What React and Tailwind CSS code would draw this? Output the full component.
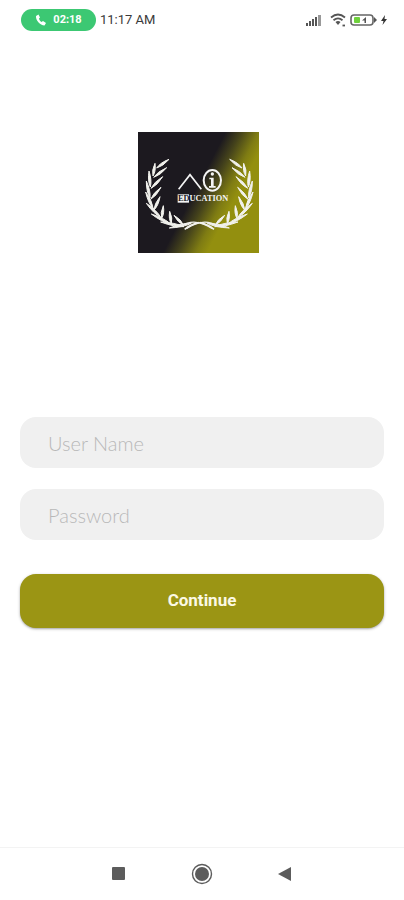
import { useState } from 'react';

// Each entry is one leaf: base point, tip point.
const LEAVES = [
  [56, 108, 93, 82],
  [45, 132, 51, 94],
  [47, 136, 86, 107],
  [37, 165, 33, 117],
  [39, 169, 74, 134],
  [36, 198, 25, 147],
  [38, 202, 69, 166],
  [46, 231, 23, 180],
  [48, 234, 66, 194],
  [69, 257, 25, 214],
  [71, 259, 76, 221],
  [98, 276, 40, 246],
  [100, 275, 95, 238],
  [138, 284, 68, 270],
  [136, 279, 108, 250],
  [160, 274, 94, 288],
];

function leafPath([x1, y1, x2, y2]) {
  const dx = x2 - x1;
  const dy = y2 - y1;
  const len = Math.hypot(dx, dy);
  const nx = (-dy / len) * 7;
  const ny = (dx / len) * 7;
  const mx = x1 + dx * 0.4;
  const my = y1 + dy * 0.4;
  return `M${x1} ${y1}Q${mx + nx} ${my + ny} ${x2} ${y2}Q${mx - nx} ${my - ny} ${x1} ${y1}Z`;
}

function Branch() {
  return (
    <g fill="#f1f1ec" stroke="#f1f1ec" strokeWidth="3" strokeLinejoin="round">
      {LEAVES.map((leaf) => (
        <path key={leaf.join()} d={leafPath(leaf)} />
      ))}
      <path d="M128 282C160 264 186 268 222 289" fill="none" strokeWidth="4" />
      <path d="M140 292Q160 276 182 272" fill="none" strokeWidth="5" />
    </g>
  );
}

function Logo() {
  return (
    <svg viewBox="0 0 363 363" className="size-[121px]" role="img" aria-label="Ai Education">
      <defs>
        <linearGradient id="logo-bg" gradientUnits="userSpaceOnUse" x1="171" y1="177" x2="275" y2="231">
          <stop offset="0" stopColor="#1c191f" />
          <stop offset="0.35" stopColor="#45431b" />
          <stop offset="0.75" stopColor="#7f7c13" />
          <stop offset="1" stopColor="#938f0f" />
        </linearGradient>
      </defs>
      <rect width="363" height="363" fill="url(#logo-bg)" />
      <Branch />
      <g transform="translate(368 0) scale(-1 1)">
        <Branch />
      </g>
      <path d="M122 172L156 128L190 172" fill="none" stroke="#f4f4f4" strokeWidth="5" />
      <ellipse cx="223" cy="145" rx="26" ry="31" fill="none" stroke="#f4f4f4" strokeWidth="6" />
      <circle cx="223" cy="126" r="5" fill="#f4f4f4" />
      <path d="M214 137H227V162H233V167H213V162H219V142H214Z" fill="#f4f4f4" />
      <rect x="119" y="187" width="34" height="25" fill="#f4f4f4" />
      <text
        x="120"
        y="208"
        fontSize="25"
        fontWeight="700"
        fill="#f4f4f4"
        className="font-['Liberation_Serif',serif]"
      >
        <tspan fill="#1c191f">ED</tspan>UCATION
      </text>
    </svg>
  );
}

function StatusBar() {
  return (
    <header className="flex h-10 items-center px-[21px] text-[#3a3a3a]">
      <div className="flex h-[22px] w-[75px] items-center justify-center gap-1.5 rounded-full bg-[#3cc873] text-white">
        <svg viewBox="0 0 24 24" className="size-3" fill="currentColor" aria-hidden="true">
          <path d="M7 1L2 4C1 12 10 23 19 23L22 18L16 14L13 16C10 14 8 11 8 9L10 7Z" />
        </svg>
        <span className="text-[11px] font-bold">02:18</span>
      </div>
      <span className="ml-1 text-[13px]">11:17 AM</span>
      <div className="-mr-1 ml-auto flex items-center gap-1">
        <svg viewBox="0 0 16 12" className="h-3 w-4" fill="#555" aria-hidden="true">
          <rect x="0" y="9" width="2" height="3" />
          <rect x="3" y="7" width="2" height="5" />
          <rect x="6" y="5" width="2" height="7" />
          <rect x="9" y="3" width="2" height="9" />
          <rect x="12" y="1" width="3" height="11" fill="#999" />
        </svg>
        <svg viewBox="0 0 16 14" className="ml-1 h-3.5 w-4" fill="none" stroke="#555" strokeWidth="1.8" aria-hidden="true">
          <path d="M1 4.5Q8 -1.5 15 4.5M3.5 7.3Q8 3.5 12.5 7.3" />
          <path d="M5.5 9L8 12L10.5 9Q8 7 5.5 9Z" fill="#555" stroke="none" />
          <path d="M12.5 12.5H15" />
        </svg>
        <svg viewBox="0 0 27 12" className="h-3 w-[27px]" aria-hidden="true">
          <rect x="1" y="1" width="22" height="10" rx="3" fill="none" stroke="#666" strokeWidth="1.6" />
          <path d="M24 3L27 6L24 9Z" fill="#555" />
          <rect x="4" y="3" width="6" height="6" rx="1" fill="#6fd13c" />
          <path d="M16 3L12 6.5H14.5V9H16Z" fill="#555" />
        </svg>
        <svg viewBox="0 0 6 12" className="h-3 w-1.5" fill="#333" aria-hidden="true">
          <path d="M4 1L0 7H2.5L1.5 11L6 5H3.5Z" />
        </svg>
      </div>
    </header>
  );
}

function Field({ name, label, type, value, onChange }) {
  return (
    <input
      name={name}
      type={type}
      aria-label={label}
      placeholder={label}
      value={value}
      onChange={(e) => onChange(e.target.value)}
      className="h-[51px] w-full rounded-2xl bg-[#f0f0f0] px-7 font-['Lato',sans-serif] text-xl font-light text-gray-700 outline-none placeholder:text-[#b8b8b8]"
    />
  );
}

function NavBar() {
  return (
    <nav className="flex h-[53px] items-center justify-center gap-[62px] border-t border-[#f3f3f3] text-[#5c5c5c]">
      <button type="button" aria-label="Recent apps">
        <svg viewBox="0 0 22 22" className="size-[22px]" fill="currentColor">
          <rect x="5" y="4" width="13" height="13" rx="1" />
        </svg>
      </button>
      <button type="button" aria-label="Home">
        <svg viewBox="0 0 22 22" className="size-[22px]">
          <circle cx="11" cy="11" r="9.5" fill="none" stroke="currentColor" strokeWidth="1.4" />
          <circle cx="11" cy="11" r="7" fill="currentColor" />
        </svg>
      </button>
      <button type="button" aria-label="Back">
        <svg viewBox="0 0 22 22" className="size-[22px]" fill="currentColor">
          <path d="M3 11L16 4V18Z" />
        </svg>
      </button>
    </nav>
  );
}

export default function App() {
  const [userName, setUserName] = useState('');
  const [password, setPassword] = useState('');

  return (
    <div className="flex min-h-screen flex-col bg-white font-['Roboto',sans-serif]">
      <StatusBar />
      <main className="flex flex-1 flex-col items-center px-5 pt-[92px]">
        <h1 className="-ml-2">
          <Logo />
        </h1>
        <form className="mt-[164px] flex w-full flex-col" onSubmit={(e) => e.preventDefault()}>
          <div className="flex flex-col gap-[21px]">
            <Field name="username" label="User Name" type="text" value={userName} onChange={setUserName} />
            <Field name="password" label="Password" type="password" value={password} onChange={setPassword} />
          </div>
          <button
            type="submit"
            className="mt-[34px] h-[54px] w-full rounded-2xl bg-[#9b9514] text-[17px] font-bold text-[#fbf9e4] shadow-sm shadow-black/30"
          >
            Continue
          </button>
        </form>
      </main>
      <NavBar />
    </div>
  );
}
